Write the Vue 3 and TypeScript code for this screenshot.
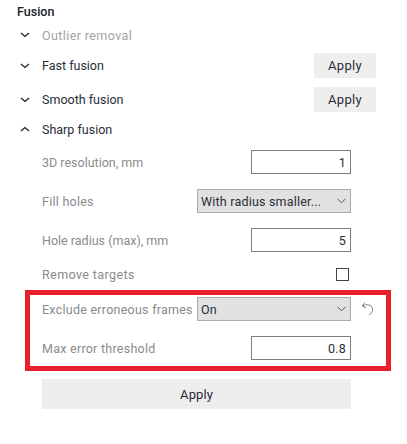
<script setup lang="ts">
interface Section { name: string; muted?: boolean; open?: boolean; apply?: boolean; cls: string }
const sections: Section[] = [
  { name: 'Outlier removal', muted: true, cls: 's-outlier' },
  { name: 'Fast fusion', apply: true, cls: 's-fast' },
  { name: 'Smooth fusion', apply: true, cls: 's-smooth' },
  { name: 'Sharp fusion', open: true, cls: 's-sharp' }
]
</script>

<template>
  <div class="page">
    <h1 class="title">Fusion</h1>
    <div v-for="s in sections" :key="s.name" class="section" :class="s.cls">
      <svg class="caret" width="10" height="6" viewBox="0 0 10 6">
        <path :d="s.open ? 'M1 5 L5 1.5 L9 5' : 'M1 1 L5 4.5 L9 1'" fill="none" stroke="#222" stroke-width="1.3" />
      </svg>
      <span class="section-name" :class="{ muted: s.muted }">{{ s.name }}</span>
      <button v-if="s.apply" class="btn small">Apply</button>
    </div>

    <div class="form">
      <div class="row first">
        <label class="tight">3D resolution, mm</label>
        <input class="num" value="1" />
      </div>
      <div class="row">
        <label>Fill holes</label>
        <div class="select"><span>With radius smaller...</span><svg width="9" height="6" viewBox="0 0 9 6"><path d="M0.5 0.8 L4.5 4.8 L8.5 0.8" fill="none" stroke="#555" stroke-width="1" /></svg></div>
      </div>
      <div class="row">
        <label class="tight">Hole radius (max), mm</label>
        <input class="num" value="5" />
      </div>
      <div class="row check-row">
        <label class="loose">Remove targets</label>
        <span class="check"></span>
      </div>
    </div>

    <div class="highlight">
      <div class="row">
        <label>Exclude erroneous frames</label>
        <div class="select"><span>On</span><svg width="9" height="6" viewBox="0 0 9 6"><path d="M0.5 0.8 L4.5 4.8 L8.5 0.8" fill="none" stroke="#555" stroke-width="1" /></svg></div>
        <svg class="undo" width="14" height="15" viewBox="0 0 14 15">
          <path d="M4 1.5 L1.2 5 L5 7 M1.5 5 C4 3.5 7.5 3.2 10 5 C12.5 7 12.5 11 8 14" fill="none" stroke="#808080" stroke-width="1" />
        </svg>
      </div>
      <div class="row">
        <label>Max error threshold</label>
        <input class="num" value="0.8" />
      </div>
    </div>

    <button class="btn wide">Apply</button>
  </div>
</template>

<style>
html, body { margin: 0; background: #fff; }
</style>

<style scoped>
.page {
  width: 407px;
  height: 444px;
  box-sizing: border-box;
  padding-top: 4px;
  font-family: Roboto, "Liberation Sans", sans-serif;
  font-size: 12.5px;
  letter-spacing: 0.2px;
  color: #2a2d38;
  overflow: hidden;
}
.title {
  margin: 0 0 0 17px;
  height: 15px;
  line-height: 15px;
  font-size: 12.5px;
  font-weight: 500;
  letter-spacing: 0;
  color: #1a1c24;
}
.section {
  display: flex;
  align-items: center;
  height: 25px;
  padding-left: 20px;
  width: 356px;
}
.s-outlier { margin-top: 6px; height: 20px; }
.s-fast { margin-top: 8px; }
.s-smooth { margin-top: 9px; }
.s-sharp { margin-top: 7px; height: 20px; }
.caret { width: 10px; margin-right: 12px; flex: none; }
.section-name { flex: 1; letter-spacing: 0; }
.muted { color: #a3a3a3; letter-spacing: 0.4px; }
.btn {
  border: none;
  background: #eeeeee;
  font: inherit;
  letter-spacing: inherit;
  color: inherit;
  padding: 0;
}
.small { width: 62px; height: 25px; font-size: 13px; letter-spacing: 0.3px; }
.form { margin-top: 11px; padding: 0 56px 0 42px; }
.row {
  position: relative;
  display: flex;
  align-items: center;
  justify-content: space-between;
  height: 24px;
  margin-top: 15px;
}
.row.first { margin-top: 0; }
.row.check-row { height: 13px; margin-top: 16px; }
label { color: #8a8a8a; white-space: nowrap; letter-spacing: 0.25px; }
label.tight { letter-spacing: 0; }
label.loose { letter-spacing: 0.4px; }
.num {
  width: 100px;
  height: 24px;
  box-sizing: border-box;
  border: 1px solid #7d7d7d;
  border-radius: 0;
  outline: none;
  padding: 0 4px;
  text-align: right;
  font: inherit;
  letter-spacing: inherit;
  color: inherit;
  background: #fff;
}
.select {
  width: 154px;
  height: 24px;
  flex: none;
  box-sizing: border-box;
  border: 1px solid #ababab;
  background: #e1e1e1;
  padding: 0 4px 0 3px;
  display: flex;
  align-items: center;
  justify-content: space-between;
}
.check {
  width: 11px;
  height: 11px;
  margin-right: 2px;
  border: 1px solid #444;
}
.highlight {
  margin: 9px 0 0 25px;
  width: 366px;
  height: 81px;
  box-sizing: border-box;
  border: 5px solid #e8202c;
  padding: 2px 35px 0 12px;
}
.highlight .row:first-child { margin-top: 0; }
.undo { position: absolute; right: -24px; top: 4px; }
.wide { display: block; width: 309px; height: 30px; margin: 8px 0 0 42px; font-size: 13px; letter-spacing: 0.1px; }
</style>
